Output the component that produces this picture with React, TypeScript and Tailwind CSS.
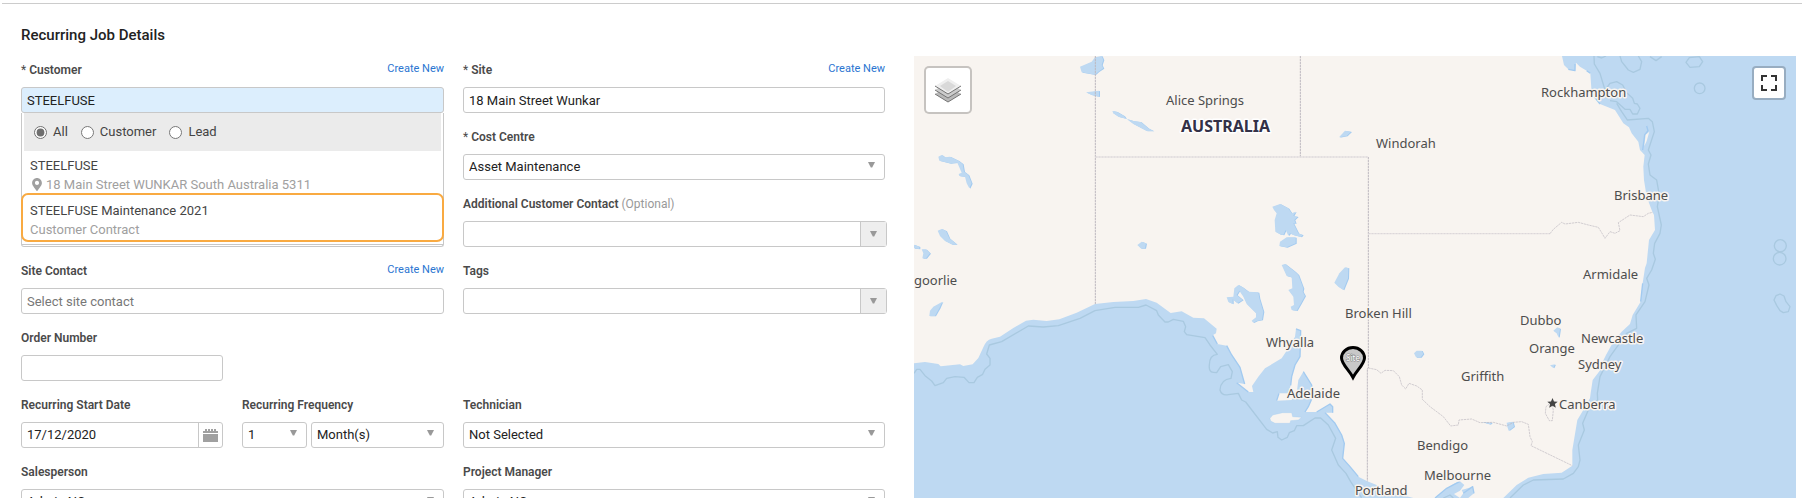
import React from 'react';
import { FaMapMarkerAlt } from 'react-icons/fa';

const inputClass =
  'block w-full h-[26px] rounded-[3px] border border-[#c8c8c8] px-[5px] text-[13px] text-[#222] outline-none';

interface FieldProps {
  id: string;
  label: string;
  required?: boolean;
  optional?: boolean;
  createNew?: boolean;
  className?: string;
  children: React.ReactNode;
}

const Field: React.FC<FieldProps> = ({ id, label, required, optional, createNew, className = '', children }) => (
  <div className={className}>
    <div className="flex h-[26px] items-start justify-between">
      <label htmlFor={id} className="text-[12px] leading-[18px] font-semibold text-[#4a4a4a]">
        {required && <span className="font-normal">* </span>}
        {label}
        {optional && <span className="font-normal text-[#999]"> (Optional)</span>}
      </label>
      {createNew && (
        <a href="#" className="text-[11px] leading-[15px] text-[#2a75d1]">Create New</a>
      )}
    </div>
    {children}
  </div>
);

const Arrow: React.FC = () => (
  <svg width="7" height="6" viewBox="0 0 7 6" className="pointer-events-none block" aria-hidden="true">
    <path d="M0 0h7L4.2 5.5H2.8z" fill="#999" />
  </svg>
);

interface SelectProps {
  id: string;
  value: string;
  label?: string;
  className?: string;
}

const Select: React.FC<SelectProps> = ({ id, value, label, className = '' }) => (
  <div className={`relative ${className}`}>
    <select id={id} aria-label={label} className={`${inputClass} appearance-none bg-white`}>
      <option>{value}</option>
    </select>
    <span className="pointer-events-none absolute inset-y-0 right-[10px] flex items-center pb-1">
      <Arrow />
    </span>
  </div>
);

const ComboBox: React.FC<{ id: string }> = ({ id }) => (
  <div className="-mr-0.5 flex h-[26px] rounded-[3px] border border-[#c8c8c8]">
    <input id={id} type="text" className="min-w-0 flex-1 px-[5px] text-[13px] outline-none" />
    <button
      type="button"
      aria-label="Show options"
      className="flex w-[26px] items-center justify-center border-l border-[#c8c8c8] bg-[#eee]"
    >
      <Arrow />
    </button>
  </div>
);

const CustomerMenu: React.FC = () => (
  <div className="h-[134px] rounded-b-[3px] border-x border-b border-[#c8c8c8] text-[13px] text-[#444]">
    <div className="flex h-[132px] flex-col border-b border-[#c8c8c8]">
      <div className="mx-0.5 flex h-[38px] shrink-0 items-center gap-[13px] bg-[#ebebeb] px-[10px]">
        {['All', 'Customer', 'Lead'].map((name) => (
          <label key={name} className="flex items-center gap-[6px]">
            <input type="radio" name="customerType" defaultChecked={name === 'All'} className="h-[13px] w-[13px] accent-[#6f6f6f]" />
            {name}
          </label>
        ))}
      </div>
      <button type="button" className="mt-[5px] h-[37px] shrink-0 px-2 text-left leading-[19px]">
        <span className="block">STEELFUSE</span>
        <span className="flex items-center gap-1 text-[#a0a0a0]">
          <FaMapMarkerAlt className="ml-0.5 h-[13px] w-[10px]" />
          18 Main Street WUNKAR South Australia 5311
        </span>
      </button>
      <button
        type="button"
        className="-mx-px h-[49px] shrink-0 rounded-[7px] border-2 border-[#f9aa41] px-[7px] pt-[5px] text-left leading-[19px]"
      >
        <span className="block">STEELFUSE Maintenance 2021</span>
        <span className="block text-[#a0a0a0]">Customer Contract</span>
      </button>
    </div>
  </div>
);

const lakes = [
  'M540 80L575 65L585 52L605 48L610 60L605 75L610 85L595 95L585 104L545 97z',
  'M558 157L597 152V170L575 165z',
  'M637 213L650 215L672 228L678 236L655 230L640 220z',
  'M680 237L700 243L722 246L745 265L760 273H740L700 252z',
  'M115 350L125 345L135 352L150 350L175 362L188 372L192 395L205 405L215 430L208 445L200 430L195 410L178 408L176 402L185 398L172 368L150 370L118 362z',
  'M113 572L125 567L138 573L148 595L170 613H155L135 603L120 588z',
  'M42 614L58 620V627L42 625z',
  'M65 628H78L90 640L78 655H67L70 640z',
  'M712 615L725 605L738 610L735 625H722z',
  'M1117 500L1140 492L1165 505L1175 520L1187 515L1180 528L1193 530L1183 540L1187 550H1180L1195 580L1208 585L1203 591L1180 585L1170 580L1165 587L1157 570L1150 585L1140 583L1126 575L1124 540L1130 520L1122 510z',
  'M1140 605L1160 592H1187V610L1160 622L1138 618z',
  'M1145 675L1155 672L1185 695L1195 705L1210 745L1208 755L1215 768L1200 795L1190 812L1175 810L1172 800L1182 795L1180 770L1165 750L1177 745L1175 712L1160 708z',
  'M1335 682L1345 684L1344 715L1330 750L1315 740L1303 728L1318 700z',
  'M980 772L1000 770L1003 745L1015 735L1028 742L1045 755L1075 757L1078 775L1090 815L1086 840L1070 843L1060 848L1055 842L1068 832V820L1040 792L1030 770L1018 752L1010 765L1028 780L1012 790L998 778V792L985 786z',
  'M1317 292L1335 272L1353 275L1340 288z',
  'M90 812L100 800L127 785L118 805L105 828H88z',
  'M1542 940L1550 932L1565 932L1570 942L1562 952H1548z',
  'M1960 872L1972 862L1980 866L1976 893L1970 880z',
  'M1950 976L1965 973L1960 984z',
  'M1745 1146L1775 1148L1770 1153z',
  'M1820 1148L1838 1145L1842 1160L1826 1172L1822 1160z',
];

const cities = [
  { name: 'goorlie', x: 914, y: 285 },
  { name: 'Alice Springs', x: 1166, y: 105 },
  { name: 'Rockhampton', x: 1541, y: 97 },
  { name: 'Windorah', x: 1376, y: 148 },
  { name: 'Brisbane', x: 1614, y: 200 },
  { name: 'Armidale', x: 1583, y: 279 },
  { name: 'Broken Hill', x: 1345, y: 318 },
  { name: 'Whyalla', x: 1266, y: 347 },
  { name: 'Adelaide', x: 1287, y: 398 },
  { name: 'Dubbo', x: 1520, y: 325 },
  { name: 'Newcastle', x: 1581, y: 343 },
  { name: 'Orange', x: 1529, y: 353 },
  { name: 'Sydney', x: 1578, y: 369 },
  { name: 'Griffith', x: 1461, y: 381 },
  { name: 'Canberra', x: 1559, y: 409 },
  { name: 'Bendigo', x: 1417, y: 450 },
  { name: 'Melbourne', x: 1424, y: 480 },
  { name: 'Portland', x: 1355, y: 495 },
];

const MapDrawing: React.FC = () => (
  <svg
    viewBox="914 56 882 442"
    preserveAspectRatio="xMidYMin slice"
    className="block h-full w-full bg-[#bed9f2] font-['Noto_Sans',sans-serif]"
    role="img"
    aria-label="Map of Australia"
  >
    <g transform="translate(900 40) scale(0.33333)" strokeLinejoin="round">
      {/* Mainland */}
      <path
        fill="#f8f4f0"
        d="M42 48V970L75 966L115 972L122 979L180 973L190 978L218 973L235 954L250 922Q258 900 275 896L300 890L340 864L378 842L400 839L440 843L478 838L530 818L585 792L640 786L700 783L738 777L770 788L812 819L845 814L880 833L912 835L950 866L948 880L938 886L952 912L980 917L995 945L1020 982L1034 1032L1010 1028L1045 1056L1060 1056L1056 1038L1075 1010L1095 985L1145 955L1165 925L1185 890L1188 867L1202 872L1200 950L1185 975L1175 1010L1172 1036L1165 1060L1137 1060L1130 1082L1175 1080L1190 1060L1195 1020L1210 995L1235 1035L1238 1070L1225 1100L1215 1116L1250 1116L1290 1092L1298 1100V1118L1275 1118L1305 1150L1325 1185L1333 1210L1328 1255L1350 1280L1375 1310L1402 1324L1430 1335L1480 1358L1540 1374H1605L1640 1345L1665 1330L1680 1324L1693 1335L1680 1352L1662 1362L1680 1374L1690 1360L1685 1350L1718 1340L1722 1360L1705 1374H1810L1850 1335L1885 1313L1930 1302L1985 1298L2017 1277V1230L2032 1140L2050 1110L2070 1075L2072 1060L2078 1020L2105 985L2108 965L2118 945L2140 905L2165 875L2190 852L2198 825L2222 785L2228 730L2235 684L2240 670L2247 600L2265 570L2262 525L2257 515L2240 470L2232 420L2230 380L2234 345L2220 330L2215 305L2195 280L2187 262L2170 250L2145 210L2100 192L2075 160L2071 100L2060 92L2040 80L2028 68L2025 92L2005 88L1992 75L1986 48z"
      />
      {/* Shaded shore lines */}
      <g fill="none" stroke="#a2caf0" strokeWidth="4">
        <path d="M938 886L952 912M980 917L995 945L1020 982L1034 1032M1010 1028L1045 1056M1188 867L1202 872L1200 950L1185 975L1175 1010L1172 1036M1137 1060L1130 1082M1210 995L1235 1035L1238 1070L1225 1100L1215 1116M1250 1116L1290 1092L1298 1100V1118M1275 1118L1305 1150L1325 1185L1333 1210L1328 1255L1350 1280L1375 1310" />
        <path d="M1605 1374L1640 1345L1680 1324M1690 1360L1718 1340L1722 1360M2025 72V92L2005 88M2060 92L2071 100M2240 258L2244 272L2234 285L2228 330M2100 192L2075 160M2228 730L2222 785" />
      </g>
      {/* Islands */}
      <path fill="#f8f4f0" stroke="#a2caf0" strokeWidth="1" d="M1110 1135L1118 1125L1148 1118L1175 1118L1178 1130L1205 1132L1195 1140L1172 1142L1170 1150H1125L1112 1143z" />
      <path fill="#f8f4f0" d="M2237 284L2248 275L2240 303L2233 318z" />
      {/* Lakes */}
      {lakes.map((d) => (
        <g key={d}>
          <path d={d} fill="#a2caf0" transform="translate(3 1)" />
          <path d={d} fill="#bed9f2" />
        </g>
      ))}
      {/* Depth contours */}
      <g fill="none" stroke="#a9c9e0" strokeWidth="4">
        <path d="M42 1000L50 988H60L75 1007L95 1023L105 1037L130 1028L140 1015L165 1010L192 1012L207 1028H222L232 1012L248 1003L255 988L270 975V955L260 942L268 915L305 905L385 858L430 861L475 857L540 835L585 812L645 802H715L738 795L770 812L775 825L795 846H805L820 838L850 844L857 860L853 875L860 884L915 893L930 915L952 943Q928 945 928 975Q926 996 940 997L950 998L962 980L985 974L997 995L993 1015Q962 1018 960 1050Q965 1068 985 1064L1015 1060L1025 1080L1037 1086L1100 1168L1118 1179L1132 1175L1134 1192L1145 1200L1162 1192L1168 1178L1183 1172L1190 1157H1210L1245 1134H1262L1285 1155L1307 1195L1295 1230L1315 1275L1338 1300L1352 1325L1385 1374" />
        <path d="M2082 48L2083 72L2100 100L2115 150L2130 130L2150 125L2168 135L2180 158L2198 175L2203 190L2212 192L2220 205L2212 222H2198L2190 208L2175 208L2150 185L2130 182M2150 190L2165 215L2182 240L2245 235L2257 245L2263 275L2245 330L2253 345L2245 372L2250 405L2270 420L2278 465L2272 500L2284 555L2280 580L2264 610L2260 640L2266 658L2255 690L2240 715L2247 735L2235 785L2208 825L2210 865L2180 880L2130 950L2100 1010L2092 1060L2093 1080L2065 1110L2048 1150L2053 1170L2035 1215L2040 1260L2035 1280L2020 1300L1990 1317L1900 1320L1870 1335L1830 1374M1630 1374L1650 1365L1660 1374" />
        <path d="M2092 50L2105 54L2118 48M2160 48L2165 65L2185 90L2200 97L2220 88L2225 65L2215 48M2250 50L2268 62L2285 50M2358 67L2368 53L2398 50L2408 65L2398 80L2370 82z" />
        <path d="M2622 780L2628 767L2640 762L2652 768L2658 785L2670 800L2665 815L2650 818L2640 812L2630 796z" />
        <circle cx="2399" cy="145" r="16" />
        <circle cx="2641" cy="617" r="18" />
        <circle cx="2639" cy="656" r="19" />
      </g>
      {/* State borders */}
      <g fill="none" stroke="#bdb8bf" strokeWidth="3" strokeDasharray="7 2">
        <path d="M586 48V792M1201 48V350M1405 351V984L1402 986V1324" />
        <path stroke="#dcd7da" strokeWidth="4" d="M586 351H1405M1405 581H1950" />
        <path strokeWidth="2" d="M1950 581L1960 568L1985 547L1995 552L2035 547L2065 555L2095 562L2105 578L2115 595L2130 575L2145 580L2160 572L2155 548L2190 525L2230 530L2245 520L2258 517M1405 984L1430 989L1443 1000L1455 991L1480 992L1498 1010L1505 1035L1517 1047L1527 1030L1550 1038L1567 1050V1078L1590 1100L1630 1130L1652 1158L1675 1155L1677 1140L1715 1137L1740 1148L1780 1147L1820 1158L1840 1147L1865 1145L1885 1153L1890 1190L1897 1205L1893 1217L2017 1277M1948 1092L1938 1100L1936 1120L1948 1142H1957L1960 1110L1956 1095" />
      </g>
    </g>
    <g fontSize="13" fill="#4d4d4d" stroke="#f8f4f0" strokeWidth="3" strokeLinejoin="round" paintOrder="stroke">
      {cities.map((city) => (
        <text key={city.name} x={city.x} y={city.y}>{city.name}</text>
      ))}
      <text x="1181" y="132" fontSize="16" fontWeight="700" fill="#333147" stroke="#fff">AUSTRALIA</text>
    </g>
    <path fill="#444" d="M1552.5 398l1.5 3.400 3.700.3-2.800 2.400.9 3.700-3.300-2-3.300 2 .9-3.700-2.800-2.400 3.700-.3z" />
    {/* Site marker */}
    <path d="M1353 377.5C1349 370 1341.5 364 1341.5 358a11.5 10.5 0 0 1 23 0C1364.5 364 1357 370 1353 377.5z" fill="#c8c8c8" stroke="#000" strokeWidth="3" />
    <text x="1353" y="361" textAnchor="middle" fontSize="8" fill="#fff" stroke="#888" strokeWidth="1" paintOrder="stroke">Site</text>
  </svg>
);

const SiteMap: React.FC = () => (
  <section className="relative min-h-0 overflow-hidden" aria-label="Site map">
    <MapDrawing />
    <button
      type="button"
      aria-label="Layers"
      className="absolute top-[10px] left-[10px] flex h-12 w-12 items-center justify-center rounded-[5px] border-2 border-black/20 bg-white bg-clip-padding"
    >
      <svg width="26" height="26" viewBox="0 0 26 26" aria-hidden="true">
        <path d="M0 17l13-8 13 8-13 8z" fill="#b9b9b9" />
        <path d="M0 17l13 8 13-8" fill="none" stroke="#747474" />
        <path d="M0 13l13-8 13 8-13 8z" fill="#cbcbcb" />
        <path d="M0 13l13 8 13-8" fill="none" stroke="#747474" />
        <path d="M0 9l13-8 13 8-13 8z" fill="#efefef" />
        <path d="M5 9l8-5 8 5-8 6z" fill="#d9d9d9" />
        <path d="M0 9l13 8 13-8" fill="none" stroke="#747474" />
      </svg>
    </button>
    <button
      type="button"
      aria-label="Full screen"
      className="absolute top-[10px] right-[10px] flex h-[34px] w-[34px] items-center justify-center rounded-[4px] border-2 border-black/20 bg-white bg-clip-padding"
    >
      <svg width="16" height="16" viewBox="0 0 16 16" fill="none" stroke="#333" strokeWidth="2" aria-hidden="true">
        <path d="M1 6V1h5M10 1h5v5M15 10v5h-5M6 15H1v-5" />
      </svg>
    </button>
  </section>
);

export default function App() {
  return (
    <main className="flex h-screen flex-col overflow-hidden bg-white pt-[3px] font-[Roboto,sans-serif] text-[#444]">
      <hr className="ml-0.5 border-[#ccc]" />
      <div className="grid min-h-0 flex-1 grid-cols-[864fr_882fr] grid-rows-[minmax(0,1fr)] gap-[29px] pr-[6px] pl-[21px]">
        <form className="min-w-0 pt-[21px]">
          <h1 className="text-[15px] leading-[20px] font-medium text-[#222]">Recurring Job Details</h1>
          <div className="mt-4 grid grid-cols-[423fr_422fr] gap-x-[19px] gap-y-[15px]">
            <Field id="customer" label="Customer" required createNew className="row-span-3">
              <input id="customer" type="text" defaultValue="STEELFUSE" className={`${inputClass} bg-[#dceefd]`} />
              <CustomerMenu />
            </Field>
            <Field id="site" label="Site" required createNew>
              <input id="site" type="text" defaultValue="18 Main Street Wunkar" className={inputClass} />
            </Field>
            <Field id="costCentre" label="Cost Centre" required>
              <Select id="costCentre" value="Asset Maintenance" />
            </Field>
            <Field id="additionalContact" label="Additional Customer Contact" optional>
              <ComboBox id="additionalContact" />
            </Field>
            <Field id="siteContact" label="Site Contact" createNew>
              <input id="siteContact" type="text" placeholder="Select site contact" className={`${inputClass} placeholder:text-[#777]`} />
            </Field>
            <Field id="tags" label="Tags">
              <ComboBox id="tags" />
            </Field>
            <div className="grid grid-cols-2 gap-[19px]">
              <Field id="orderNumber" label="Order Number">
                <input id="orderNumber" type="text" className={inputClass} />
              </Field>
            </div>
            <div className="col-start-1 grid grid-cols-2 gap-[19px]">
              <Field id="startDate" label="Recurring Start Date">
                <div className="flex h-[26px] rounded-[3px] border border-[#c8c8c8]">
                  <input id="startDate" type="text" defaultValue="17/12/2020" className="min-w-0 flex-1 px-[5px] text-[13px] text-[#222] outline-none" />
                  <button type="button" aria-label="Pick a date" className="flex w-6 items-center justify-center border-l border-[#c8c8c8] text-[#a0a0a0]">
                    <svg width="15" height="13" viewBox="0 0 15 13" fill="currentColor" aria-hidden="true">
                      <path d="M0 4V2h2V0h2v2h1V0h2v2h1V0h2v2h1V0h2v2h2v2zM0 5h15v8H0z" />
                    </svg>
                  </button>
                </div>
              </Field>
              <Field id="frequency" label="Recurring Frequency">
                <div className="flex gap-1">
                  <Select id="frequency" value="1" className="w-[65px]" />
                  <Select id="frequencyUnit" value="Month(s)" label="Frequency unit" className="flex-1" />
                </div>
              </Field>
            </div>
            <Field id="technician" label="Technician">
              <Select id="technician" value="Not Selected" />
            </Field>
            <Field id="salesperson" label="Salesperson">
              <Select id="salesperson" value="Admin NC" />
            </Field>
            <Field id="projectManager" label="Project Manager">
              <Select id="projectManager" value="Admin NC" />
            </Field>
          </div>
        </form>
        <div className="grid min-h-0 min-w-0 grid-rows-[minmax(0,1fr)] pt-[52px]">
          <SiteMap />
        </div>
      </div>
    </main>
  );
}
